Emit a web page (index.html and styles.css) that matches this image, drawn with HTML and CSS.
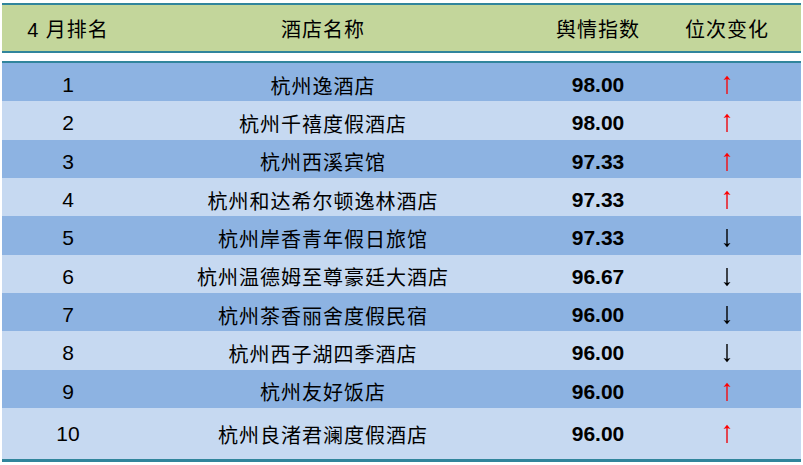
FILE: index.html
```html
<!DOCTYPE html>
<html lang="zh-CN">
<head>
<meta charset="utf-8">
<title>4月排名</title>
<link rel="stylesheet" href="styles.css">
</head>
<body>
<div class="sheet">
  <div class="head">
    <div class="c1">4 月排名</div>
    <div class="c2">酒店名称</div>
    <div class="c3">舆情指数</div>
    <div class="c4">位次变化</div>
  </div>
  <div class="body">
    <div class="row dark"><div class="c1">1</div><div class="c2">杭州逸酒店</div><div class="c3 num">98.00</div><div class="c4"><svg class="up" viewBox="0 0 10 20" width="10" height="20"><path d="M5 3.5V19" /><polygon points="1.5,5 5,0.8 8.5,5 5,4" /></svg></div></div>
    <div class="row light"><div class="c1">2</div><div class="c2">杭州千禧度假酒店</div><div class="c3 num">98.00</div><div class="c4"><svg class="up" viewBox="0 0 10 20" width="10" height="20"><path d="M5 3.5V19" /><polygon points="1.5,5 5,0.8 8.5,5 5,4" /></svg></div></div>
    <div class="row dark"><div class="c1">3</div><div class="c2">杭州西溪宾馆</div><div class="c3 num">97.33</div><div class="c4"><svg class="up" viewBox="0 0 10 20" width="10" height="20"><path d="M5 3.5V19" /><polygon points="1.5,5 5,0.8 8.5,5 5,4" /></svg></div></div>
    <div class="row light"><div class="c1">4</div><div class="c2">杭州和达希尔顿逸林酒店</div><div class="c3 num">97.33</div><div class="c4"><svg class="up" viewBox="0 0 10 20" width="10" height="20"><path d="M5 3.5V19" /><polygon points="1.5,5 5,0.8 8.5,5 5,4" /></svg></div></div>
    <div class="row dark"><div class="c1">5</div><div class="c2">杭州岸香青年假日旅馆</div><div class="c3 num">97.33</div><div class="c4"><svg class="down" viewBox="0 0 10 20" width="10" height="20"><path d="M5 1V16.5" /><polygon points="1.5,15 5,19.2 8.5,15 5,16" /></svg></div></div>
    <div class="row light"><div class="c1">6</div><div class="c2">杭州温德姆至尊豪廷大酒店</div><div class="c3 num">96.67</div><div class="c4"><svg class="down" viewBox="0 0 10 20" width="10" height="20"><path d="M5 1V16.5" /><polygon points="1.5,15 5,19.2 8.5,15 5,16" /></svg></div></div>
    <div class="row dark"><div class="c1">7</div><div class="c2">杭州茶香丽舍度假民宿</div><div class="c3 num">96.00</div><div class="c4"><svg class="down" viewBox="0 0 10 20" width="10" height="20"><path d="M5 1V16.5" /><polygon points="1.5,15 5,19.2 8.5,15 5,16" /></svg></div></div>
    <div class="row light"><div class="c1">8</div><div class="c2">杭州西子湖四季酒店</div><div class="c3 num">96.00</div><div class="c4"><svg class="down" viewBox="0 0 10 20" width="10" height="20"><path d="M5 1V16.5" /><polygon points="1.5,15 5,19.2 8.5,15 5,16" /></svg></div></div>
    <div class="row dark"><div class="c1">9</div><div class="c2">杭州友好饭店</div><div class="c3 num">96.00</div><div class="c4"><svg class="up" viewBox="0 0 10 20" width="10" height="20"><path d="M5 3.5V19" /><polygon points="1.5,5 5,0.8 8.5,5 5,4" /></svg></div></div>
    <div class="row light last"><div class="c1">10</div><div class="c2">杭州良渚君澜度假酒店</div><div class="c3 num">96.00</div><div class="c4"><svg class="up" viewBox="0 0 10 20" width="10" height="20"><path d="M5 3.5V19" /><polygon points="1.5,5 5,0.8 8.5,5 5,4" /></svg></div></div>
  </div>
</div>
</body>
</html>
```

FILE: styles.css
```css
html, body {
  margin: 0;
  padding: 0;
  background: #ffffff;
}

body {
  font-family: "Liberation Sans", "Noto Sans CJK SC", sans-serif;
  color: #000000;
}

.sheet {
  margin: 3px 0 0 2px;
  width: 799px;
}

.head,
.row {
  display: grid;
  grid-template-columns: 132px 378px 172px 117px;
  align-items: center;
  text-align: center;
}

.head {
  height: 46px;
  background: #c3d69b;
  border-top: 2px solid #31859c;
  border-bottom: 2px solid #31859c;
  font-size: 20px;
  letter-spacing: 1px;
}

.body {
  margin-top: 8px;
  border-top: 2px solid #31859c;
  border-bottom: 3px solid #31859c;
}

.row {
  height: 38.33px;
  box-sizing: border-box;
  padding-top: 6px;
  font-size: 21px;
}

.row .c2 {
  font-size: 20px;
  letter-spacing: 1px;
}

.row.last {
  height: 51px;
  padding-top: 2px;
}

.dark {
  background: #8db3e2;
}

.light {
  background: #c6d9f1;
}

.num {
  font-weight: bold;
}

.c4 {
  padding-right: 31px;
  display: flex;
  justify-content: center;
  align-items: center;
}

.head .c4 {
  display: block;
}

.c4 svg {
  display: block;
}

.up path {
  stroke: #e8202a;
  stroke-width: 1.6;
  fill: none;
}

.up polygon {
  fill: #ff0000;
}

.down path {
  stroke: #000000;
  stroke-width: 1.4;
  fill: none;
}

.down polygon {
  fill: #000000;
}
```
